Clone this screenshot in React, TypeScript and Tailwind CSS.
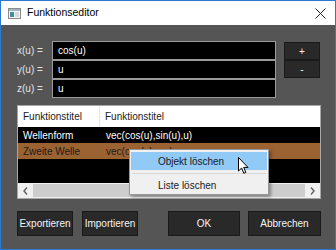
import React from "react"

const labels = ["x(u) =", "y(u) =", "z(u) ="]
const values = ["cos(u)", "u", "u"]

function WindowIcon() {
  return (
    <svg width="13" height="11" viewBox="0 0 13 11">
      <rect x="0.5" y="0.5" width="12" height="10" fill="#f4f4f4" stroke="#8a8a8a" />
      <rect x="1" y="1" width="11" height="2" fill="#9fb4c8" />
      <rect x="2" y="4" width="4" height="5" fill="#3e8f9a" />
      <rect x="7" y="4" width="4" height="5" fill="#d8d8d8" />
    </svg>
  )
}

function Cursor() {
  return (
    <svg width="12" height="18" viewBox="0 0 12 18" className="absolute left-[237px] top-[156px]">
      <path
        d="M0.5 0.5 L0.5 14 L3.6 11 L5.8 16.3 L7.8 15.4 L5.7 10.4 L10 10.4 Z"
        fill="#ffffff"
        stroke="#000000"
        strokeWidth="1"
        strokeLinejoin="round"
      />
    </svg>
  )
}

function Btn({ children, className }: { children: React.ReactNode; className: string }) {
  return (
    <div
      className={`flex items-center justify-center bg-[#292929] border border-[#1a1a1a] text-[#f5f5f5] ${className}`}>
      {children}
    </div>
  )
}

export default function App() {
  return (
    <div className="relative w-[336px] h-[250px] flex flex-col border border-[#2b79d0] bg-[#555555] font-['Liberation_Sans',Arial,sans-serif] text-[10px] overflow-hidden">
      {/* title bar */}
      <div className="h-[24px] bg-white flex items-center pl-[7px] pr-[9px] shrink-0">
        <WindowIcon />
        <span className="ml-[6px] text-[10.5px] text-black">Funktionseditor</span>
        <svg width="11" height="11" viewBox="0 0 11 11" className="ml-auto">
          <path d="M0.5 0.5 L10.5 10.5 M10.5 0.5 L0.5 10.5" stroke="#222" strokeWidth="1" />
        </svg>
      </div>

      <div className="flex-1 flex flex-col pl-[16px] pr-[14px] pt-[16px]">
        {/* inputs */}
        <div className="flex">
          <div className="w-[35px] flex flex-col text-[#e4e4e4]">
            {labels.map((l) => (
              <div key={l} className="h-[19px] flex items-center">
                {l}
              </div>
            ))}
          </div>
          <div className="w-[224px] flex flex-col">
            {values.map((v, i) => (
              <div
                key={i}
                className="h-[19px] bg-black border border-[#9b9b9b] flex items-center pl-[5px] text-white">
                {v}
              </div>
            ))}
          </div>
          <div className="ml-[8px] w-[36px] flex flex-col pt-[1px]">
            <Btn className="h-[18px]">+</Btn>
            <Btn className="h-[18px]">-</Btn>
          </div>
        </div>

        {/* list */}
        <div className="mt-[7px] h-[94px] border border-[#a8a8a8] bg-black flex flex-col">
          <div className="h-[21px] bg-white flex text-[#1a1a1a] shrink-0">
            <div className="w-[82px] flex items-center pl-[5px] border-r border-[#e5e5e5]">Funktionstitel</div>
            <div className="flex items-center pl-[5px]">Funktionstitel</div>
          </div>
          <div className="h-[16px] flex text-white">
            <div className="w-[83px] flex items-center pl-[5px]">Wellenform</div>
            <div className="flex items-center pl-[5px]">vec(cos(u),sin(u),u)</div>
          </div>
          <div className="h-[16px] flex bg-[#9b6232] text-[#1c1c1c]">
            <div className="w-[83px] flex items-center pl-[5px]">Zweite Welle</div>
            <div className="flex items-center pl-[5px]">vec(cos(u),u,u)</div>
          </div>
          <div className="flex-1" />
          <div className="h-[15px] bg-[#f0f0f0] flex items-center shrink-0">
            <div className="w-[15px] flex items-center justify-center">
              <svg width="5" height="8" viewBox="0 0 5 8">
                <path d="M4 0.5 L1 4 L4 7.5" fill="none" stroke="#606060" strokeWidth="1.4" />
              </svg>
            </div>
            <div className="flex-1 h-[13px] bg-[#cdcdcd]" />
            <div className="w-[15px] flex items-center justify-center">
              <svg width="5" height="8" viewBox="0 0 5 8">
                <path d="M1 0.5 L4 4 L1 7.5" fill="none" stroke="#606060" strokeWidth="1.4" />
              </svg>
            </div>
          </div>
        </div>

        {/* buttons */}
        <div className="mt-[12px] flex justify-between">
          <div className="flex gap-[9px]">
            <Btn className="w-[56px] h-[25px]">Exportieren</Btn>
            <Btn className="w-[56px] h-[25px]">Importieren</Btn>
          </div>
          <div className="flex gap-[8px]">
            <Btn className="w-[72px] h-[25px]">OK</Btn>
            <Btn className="w-[73px] h-[25px]">Abbrechen</Btn>
          </div>
        </div>
      </div>

      {/* context menu */}
      <div className="absolute left-[128px] top-[148px] w-[140px] h-[46px] bg-[#f0f0f0] border border-[#979797] shadow-[2px_2px_3px_rgba(0,0,0,0.35)] flex flex-col pt-[2px] px-[1px] text-[#1a1a1a]">
        <div className="h-[18px] bg-[#91c9f7] flex items-center pl-[27px]">Objekt löschen</div>
        <div className="h-[1px] bg-[#d7d7d7] mt-[3px] mx-[1px]" />
        <div className="h-[18px] mt-[2px] flex items-center pl-[27px]">Liste löschen</div>
      </div>

      <Cursor />
    </div>
  )
}
